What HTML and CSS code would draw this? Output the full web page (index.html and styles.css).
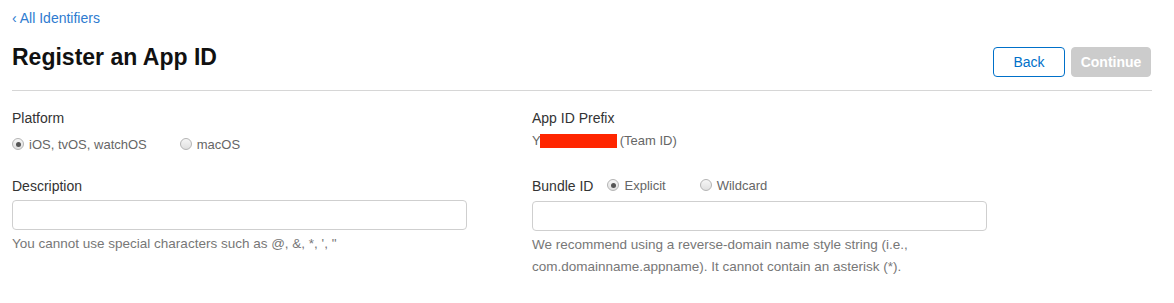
FILE: index.html
```html
<!DOCTYPE html>
<html lang="en">
<head>
    <meta charset="UTF-8">
    <meta name="viewport" content="width=device-width, initial-scale=1.0">
    <title>Register an App ID</title>
    <link rel="stylesheet" href="styles.css">
</head>
<body>
    <div class="page">
        <a class="back-link" href="#">&lsaquo; All Identifiers</a>

        <div class="page-header">
            <h1>Register an App ID</h1>
            <div class="actions">
                <button class="btn btn-outline">Back</button>
                <button class="btn btn-disabled" disabled>Continue</button>
            </div>
        </div>

        <div class="form-grid">
            <!-- 左列 -->
            <div class="column">
                <div class="field">
                    <div class="field-label">Platform</div>
                    <div class="radio-row">
                        <label class="radio-item"><input type="radio" name="platform" checked> iOS, tvOS, watchOS</label>
                        <label class="radio-item"><input type="radio" name="platform"> macOS</label>
                    </div>
                </div>

                <div class="field field-desc">
                    <div class="field-label">Description</div>
                    <input class="text-input" type="text">
                    <p class="help">You cannot use special characters such as @, &amp;, *, ', "</p>
                </div>
            </div>

            <!-- 右列 -->
            <div class="column">
                <div class="field">
                    <div class="field-label">App ID Prefix</div>
                    <div class="prefix">Y<span class="redacted"></span>(Team ID)</div>
                </div>

                <div class="field field-bundle">
                    <div class="bundle-row">
                        <span class="field-label">Bundle ID</span>
                        <label class="radio-item"><input type="radio" name="bundle" checked> Explicit</label>
                        <label class="radio-item"><input type="radio" name="bundle"> Wildcard</label>
                    </div>
                    <input class="text-input" type="text">
                    <p class="help">We recommend using a reverse-domain name style string (i.e.,<br>com.domainname.appname). It cannot contain an asterisk (*).</p>
                </div>
            </div>
        </div>
    </div>
</body>
</html>
```

FILE: styles.css
```css
body {
    margin: 0;
    font-family: 'Liberation Sans', Arial, sans-serif;
    background: #ffffff;
    color: #333333;
}
.page {
    width: 1140px;
    padding: 8px 0 0 12px;
}
.back-link {
    display: block;
    font-size: 14px;
    line-height: 20px;
    color: #2e7bd0;
    text-decoration: none;
}

/* 标题和按钮 */
.page-header {
    display: flex;
    justify-content: space-between;
    align-items: flex-start;
    padding: 19px 0 13px;
    border-bottom: 1px solid #d6d6d6;
}
.page-header h1 {
    margin: 0;
    font-size: 23px;
    line-height: 20px;
    font-weight: bold;
    color: #111111;
}
.actions {
    display: flex;
    gap: 6px;
    margin-right: 1px;
}
.btn {
    height: 30px;
    border-radius: 4px;
    font-family: inherit;
    font-size: 14px;
    padding: 0;
}
.btn-outline {
    width: 72px;
    background: #ffffff;
    border: 1px solid #0070c9;
    color: #0070c9;
}
.btn-disabled {
    width: 80px;
    background: #cccccc;
    border: 1px solid #cccccc;
    color: #ffffff;
    font-weight: bold;
}

/* 表单 */
.form-grid {
    display: grid;
    grid-template-columns: 520px 520px;
}
.field {
    padding-top: 17px;
}
.field-label {
    font-size: 14px;
    line-height: 20px;
    color: #333333;
}
.radio-row {
    display: flex;
    gap: 33px;
    margin-top: 7px;
    height: 20px;
}
.radio-item {
    display: flex;
    align-items: center;
    gap: 5px;
    font-size: 13px;
    line-height: 20px;
    color: #666666;
}
.radio-item input {
    appearance: none;
    -webkit-appearance: none;
    margin: 0;
    width: 12px;
    height: 12px;
    border: 1px solid #b4b4b4;
    border-radius: 50%;
    background: linear-gradient(#f6f6f6, #e0e0e0);
    position: relative;
    top: -1px;
}
.radio-item input:checked::after {
    content: '';
    position: absolute;
    left: 2.5px;
    top: 2.5px;
    width: 5px;
    height: 5px;
    border-radius: 50%;
    background: #555555;
}
.field-desc {
    padding-top: 21px;
}
.text-input {
    display: block;
    box-sizing: border-box;
    width: 455px;
    height: 30px;
    margin-top: 4px;
    border: 1px solid #cfcfcf;
    border-radius: 4px;
    font-family: inherit;
    font-size: 13px;
}
.help {
    margin: 3px 0 0;
    font-size: 13.5px;
    line-height: 22px;
    color: #777777;
}

/* 右列 */
.prefix {
    margin-top: 3px;
    font-size: 13px;
    line-height: 20px;
    color: #666666;
    display: flex;
    align-items: center;
}
.redacted {
    display: inline-block;
    width: 77px;
    height: 14px;
    background: #ff2600;
    margin: 0 3px 0 -1px;
}
.field-bundle {
    padding-top: 25px;
}
.bundle-row {
    display: flex;
    align-items: center;
    height: 20px;
}
.bundle-row .field-label {
    margin-right: 14px;
}
.bundle-row .radio-item + .radio-item {
    margin-left: 34px;
}
.field-bundle .text-input {
    margin-top: 5px;
}
```
